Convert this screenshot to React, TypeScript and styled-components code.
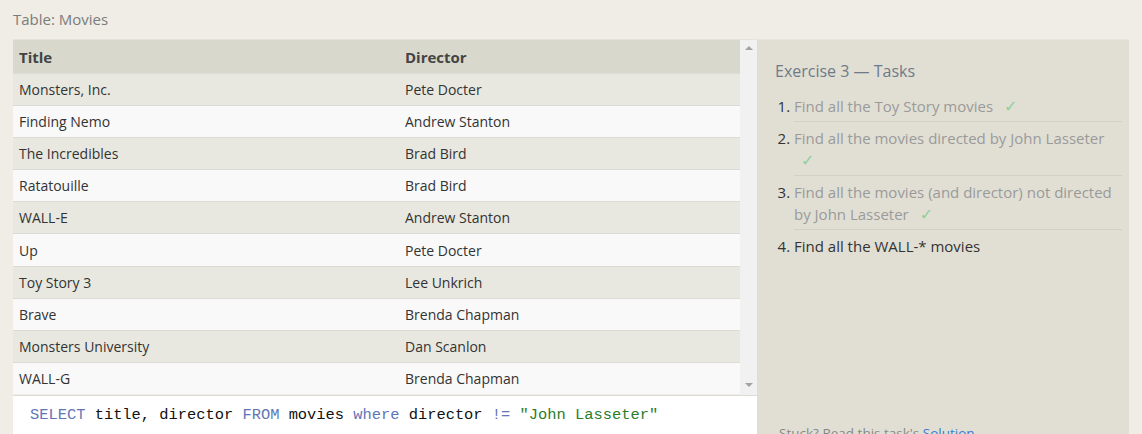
import React from "react";
import styled, { createGlobalStyle } from "styled-components";

const GlobalStyle = createGlobalStyle`
  html, body { margin: 0; padding: 0; }
  body {
    background: #efede5;
    font-family: "Open Sans", "Noto Sans", sans-serif;
    color: #333;
    overflow: hidden;
  }
`;

const Page = styled.div`
  padding: 0 13px;
  width: 1142px;
  box-sizing: border-box;
`;

const Caption = styled.div`
  height: 39px;
  line-height: 38px;
  font-size: 15px;
  color: #7c7c7c;
`;

const Main = styled.div`
  display: flex;
  align-items: flex-start;
`;

const LeftCol = styled.div`
  width: 744px;
  display: flex;
  flex-direction: column;
`;

const TableBox = styled.div`
  display: flex;
  border-top: 1px solid #e4e2da;
  height: 355px;
  overflow: hidden;
`;

const Table = styled.div`
  flex: 1;
  display: flex;
  flex-direction: column;
`;

const Row = styled.div<{ $variant: "head" | "odd" | "even" }>`
  display: grid;
  grid-template-columns: 386px 1fr;
  height: ${(p) => (p.$variant === "head" ? "33px" : "32.1px")};
  flex-shrink: 0;
  box-sizing: border-box;
  align-items: center;
  font-size: ${(p) => (p.$variant === "head" ? "15px" : "14px")};
  background: ${(p) =>
    p.$variant === "head" ? "#d9d8cc" : p.$variant === "odd" ? "#e9e8e0" : "#f9f9f9"};
  border-top: ${(p) => (p.$variant === "head" ? "none" : "1px solid #dddcd4")};
  font-weight: ${(p) => (p.$variant === "head" ? 700 : 400)};
  color: ${(p) => (p.$variant === "head" ? "#444" : "#333")};
`;

const Cell = styled.div`
  padding: 0 6px;
  white-space: nowrap;
`;

const Scrollbar = styled.div`
  width: 17px;
  background: #f1f1f1;
  display: flex;
  flex-direction: column;
  justify-content: space-between;
  align-items: center;
  padding: 6px 0 8px;
  box-sizing: border-box;
`;

const Arrow = styled.div<{ $down?: boolean }>`
  width: 0;
  height: 0;
  border-left: 4px solid transparent;
  border-right: 4px solid transparent;
  ${(p) =>
    p.$down ? "border-top: 4px solid #a3a3a3;" : "border-bottom: 4px solid #a3a3a3;"}
`;

const Editor = styled.div`
  background: #fff;
  border-top: 1px solid #dddcd4;
  height: 60px;
  padding: 7px 17px;
  box-sizing: border-box;
  font-family: "Liberation Mono", "DejaVu Sans Mono", monospace;
  font-size: 15.4px;
  line-height: 24px;
  color: #111;
  white-space: pre;
`;

const Kw = styled.span`
  color: #6275b6;
`;
const Str = styled.span`
  color: #2b7d2b;
`;

const Panel = styled.div`
  width: 372px;
  height: 405px;
  background: #e1dfd4;
  border-top: 1px solid #e8e6de;
  box-sizing: border-box;
  padding: 20px 7px 0 18px;
  display: flex;
  flex-direction: column;
`;

const PanelTitle = styled.div`
  font-size: 16px;
  color: #6f7a88;
  line-height: 22px;
  margin-bottom: 8px;
`;

const TaskList = styled.ol`
  margin: 0;
  padding: 0 0 0 19px;
  font-size: 15px;
  line-height: 22px;
`;

const Task = styled.li<{ $done?: boolean; $last?: boolean }>`
  color: ${(p) => (p.$done ? "#9a9a9a" : "#333")};
  padding: 5px 0 4px;
  border-bottom: ${(p) => (p.$last ? "none" : "1px solid #d3d1c7")};
  &::marker {
    color: #333;
  }
`;

const Check = styled.span`
  color: #8fcf9c;
  margin-left: 7px;
  font-size: 16px;
  line-height: 12px;
  font-family: "DejaVu Sans", sans-serif;
`;

const Stuck = styled.div`
  margin-top: auto;
  font-size: 13.5px;
  line-height: 22px;
  color: #888;
  padding-left: 4px;
`;

const Link = styled.span`
  color: #3a7bd5;
`;

const rows: [string, string][] = [
  ["Monsters, Inc.", "Pete Docter"],
  ["Finding Nemo", "Andrew Stanton"],
  ["The Incredibles", "Brad Bird"],
  ["Ratatouille", "Brad Bird"],
  ["WALL-E", "Andrew Stanton"],
  ["Up", "Pete Docter"],
  ["Toy Story 3", "Lee Unkrich"],
  ["Brave", "Brenda Chapman"],
  ["Monsters University", "Dan Scanlon"],
  ["WALL-G", "Brenda Chapman"],
];

export default function App() {
  return (
    <Page>
      <GlobalStyle />
      <Caption>Table: Movies</Caption>
      <Main>
        <LeftCol>
          <TableBox>
            <Table>
              <Row $variant="head">
                <Cell>Title</Cell>
                <Cell>Director</Cell>
              </Row>
              {rows.map(([t, d], i) => (
                <Row key={t} $variant={i % 2 === 0 ? "odd" : "even"}>
                  <Cell>{t}</Cell>
                  <Cell>{d}</Cell>
                </Row>
              ))}
            </Table>
            <Scrollbar>
              <Arrow />
              <Arrow $down />
            </Scrollbar>
          </TableBox>
          <Editor>
            <Kw>SELECT</Kw> title, director <Kw>FROM</Kw> movies <Kw>where</Kw> director{" "}
            <Kw>!=</Kw> <Str>"John Lasseter"</Str>
          </Editor>
        </LeftCol>
        <Panel>
          <PanelTitle>Exercise 3 — Tasks</PanelTitle>
          <TaskList>
            <Task $done>
              Find all the Toy Story movies <Check>✓</Check>
            </Task>
            <Task $done>
              Find all the movies directed by John Lasseter <Check>✓</Check>
            </Task>
            <Task $done>
              Find all the movies (and director) not directed by John Lasseter <Check>✓</Check>
            </Task>
            <Task $last>Find all the WALL-* movies</Task>
          </TaskList>
          <Stuck>
            Stuck? Read this task's <Link>Solution</Link>
          </Stuck>
        </Panel>
      </Main>
    </Page>
  );
}
